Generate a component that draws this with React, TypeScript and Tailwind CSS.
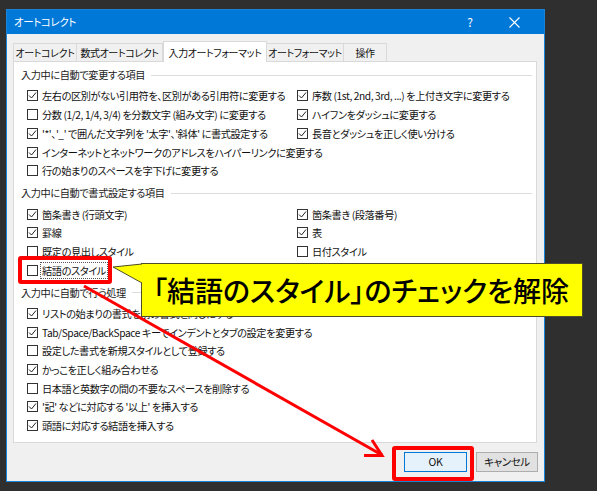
import React from "react";

type Item = { label: string; checked: boolean; focused?: boolean };

function CheckBox({ checked }: { checked: boolean }) {
  return (
    <span className="w-[11px] h-[11px] shrink-0 border border-[#333] bg-white flex items-center justify-center">
      {checked && (
        <svg width="9" height="9" viewBox="0 0 9 9">
          <polyline points="1,4.5 3.5,7 8,1.5" fill="none" stroke="#222" strokeWidth="1" />
        </svg>
      )}
    </span>
  );
}

function Row({ item }: { item: Item }) {
  return (
    <div className="h-[18.7px] flex items-center gap-[4px] whitespace-nowrap">
      <CheckBox checked={item.checked} />
      <span
        className={
          item.focused
            ? "leading-[15px] px-[1px] -ml-[2px] border border-dotted border-[#555]"
            : "leading-[15px]"
        }
      >
        {item.label}
      </span>
    </div>
  );
}

function Heading({ text }: { text: string }) {
  return (
    <div className="h-[14px] flex items-center gap-[6px] pl-[7px] pr-[4px] text-[#222]">
      <span className="whitespace-nowrap">{text}</span>
      <div className="flex-1 h-px bg-[#dcdcdc]" />
    </div>
  );
}

function Section({
  title,
  left,
  right,
  last,
}: {
  title: string;
  left: Item[];
  right?: Item[];
  last?: boolean;
}) {
  return (
    <div className={last ? "" : "mb-[6px]"}>
      <Heading text={title} />
      <div className="mt-[4.65px] flex pl-[13px]">
        <div className="w-[270px] flex flex-col">
          {left.map((it) => (
            <Row key={it.label} item={it} />
          ))}
        </div>
        {right && (
          <div className="flex flex-col">
            {right.map((it) => (
              <Row key={it.label} item={it} />
            ))}
          </div>
        )}
      </div>
    </div>
  );
}

const tabs = [
  { label: "オートコレクト", w: "w-[64px]" },
  { label: "数式オートコレクト", w: "w-[87px]" },
  { label: "入力オートフォーマット", w: "w-[104px]", active: true },
  { label: "オートフォーマット", w: "w-[78px]" },
  { label: "操作", w: "w-[44px]" },
];

export default function App() {
  return (
    <div className="relative w-[597px] h-[491px] overflow-hidden bg-[#2f2f2f] pt-[9px] pl-[6px] font-['Noto_Sans_CJK_JP',sans-serif] [font-feature-settings:'palt'] text-[10.2px] tracking-[-0.4px] text-[#111]">
      {/* DIALOG */}
      <div className="w-[539px] h-[473px] border border-[#1883d7] bg-[#f0f0f0] flex flex-col">
        {/* TITLE BAR */}
        <div className="h-[24px] bg-[#0078d7] flex items-center text-white pl-[7px] shrink-0">
          <span className="text-[10.5px]">オートコレクト</span>
          <span className="ml-auto w-[12px] text-center text-[12px]">?</span>
          <span className="w-[38px] flex justify-center mr-[11px] ml-[19px]">
            <svg width="11" height="11" viewBox="0 0 11 11">
              <path d="M0.5 0.5 L10.5 10.5 M10.5 0.5 L0.5 10.5" stroke="#fff" strokeWidth="1.1" />
            </svg>
          </span>
        </div>

        {/* TABS */}
        <div className="pl-[6px] pr-[7px] pt-[7px] flex flex-col">
          <div className="flex items-end h-[20px] relative z-10 text-[10px]">
            {tabs.map((t) =>
              t.active ? (
                <div
                  key={t.label}
                  className={`${t.w} h-[21px] -mb-[1px] bg-white border border-b-0 border-[#d9d9d9] flex items-center justify-center whitespace-nowrap`}
                >
                  {t.label}
                </div>
              ) : (
                <div
                  key={t.label}
                  className={`${t.w} h-[18px] bg-[#f0f0f0] border border-b-0 border-[#d9d9d9] -ml-px first:ml-0 flex items-center justify-center whitespace-nowrap`}
                >
                  {t.label}
                </div>
              )
            )}
          </div>

          {/* PANEL */}
          <div className="h-[382px] bg-white border border-[#d9d9d9] pt-[6px]">
            <Section
              title="入力中に自動で変更する項目"
              left={[
                { label: "左右の区別がない引用符を、区別がある引用符に変更する", checked: true },
                { label: "分数 (1/2, 1/4, 3/4) を分数文字 (組み文字) に変更する", checked: false },
                { label: "'*'、'_' で囲んだ文字列を '太字'、'斜体' に書式設定する", checked: true },
                { label: "インターネットとネットワークのアドレスをハイパーリンクに変更する", checked: true },
                { label: "行の始まりのスペースを字下げに変更する", checked: false },
              ]}
              right={[
                { label: "序数 (1st, 2nd, 3rd, ...) を上付き文字に変更する", checked: true },
                { label: "ハイフンをダッシュに変更する", checked: true },
                { label: "長音とダッシュを正しく使い分ける", checked: true },
              ]}
            />
            <Section
              title="入力中に自動で書式設定する項目"
              left={[
                { label: "箇条書き (行頭文字)", checked: true },
                { label: "罫線", checked: true },
                { label: "既定の見出しスタイル", checked: false },
                { label: "結語のスタイル", checked: false, focused: true },
              ]}
              right={[
                { label: "箇条書き (段落番号)", checked: true },
                { label: "表", checked: true },
                { label: "日付スタイル", checked: false },
              ]}
            />
            <Section
              title="入力中に自動で行う処理"
              last
              left={[
                { label: "リストの始まりの書式を前の書式と同じにする", checked: true },
                { label: "Tab/Space/BackSpace キーでインデントとタブの設定を変更する", checked: true },
                { label: "設定した書式を新規スタイルとして登録する", checked: false },
                { label: "かっこを正しく組み合わせる", checked: true },
                { label: "日本語と英数字の間の不要なスペースを削除する", checked: false },
                { label: "'記' などに対応する '以上' を挿入する", checked: true },
                { label: "頭語に対応する結語を挿入する", checked: true },
              ]}
            />
          </div>
        </div>

        {/* BUTTONS */}
        <div className="flex justify-end gap-[9px] pr-[6px] mt-[9px]">
          <button className="w-[63px] h-[20px] bg-[#e5f1fb] border border-[#0078d7] text-[10.5px]">OK</button>
          <button className="w-[62px] h-[20px] bg-[#e1e1e1] border border-[#adadad] text-[10.5px]">キャンセル</button>
        </div>
      </div>

      {/* ANNOTATIONS */}
      <div className="absolute left-[18px] top-[256px] w-[94px] h-[28px] border-4 border-[#f00] rounded-[3px]" />
      <div className="absolute left-[392px] top-[446px] w-[82px] h-[35px] border-4 border-[#f00] rounded-[3px]" />

      <div className="absolute left-[141px] top-[263px] w-[442px] h-[54px] bg-[#ffff00] border border-[#4d4d2a] flex items-center pl-[11px] tracking-normal">
        <span className="text-[28px] font-medium text-black leading-none whitespace-nowrap">
          「結語のスタイル」のチェックを解除
        </span>
      </div>

      <svg className="absolute left-0 top-0" width="597" height="491" viewBox="0 0 597 491">
        <polygon points="113,267 142,264 142,283" fill="#ffff00" />
        <polyline points="142,264 113,267 142,283" fill="none" stroke="#4d4d2a" strokeWidth="1" />
        <line x1="84" y1="286" x2="382" y2="455" stroke="#f00" strokeWidth="3" />
        <polyline points="364,455.5 382,455.5 372,440" fill="none" stroke="#f00" strokeWidth="3" strokeLinejoin="miter" />
      </svg>
    </div>
  );
}
